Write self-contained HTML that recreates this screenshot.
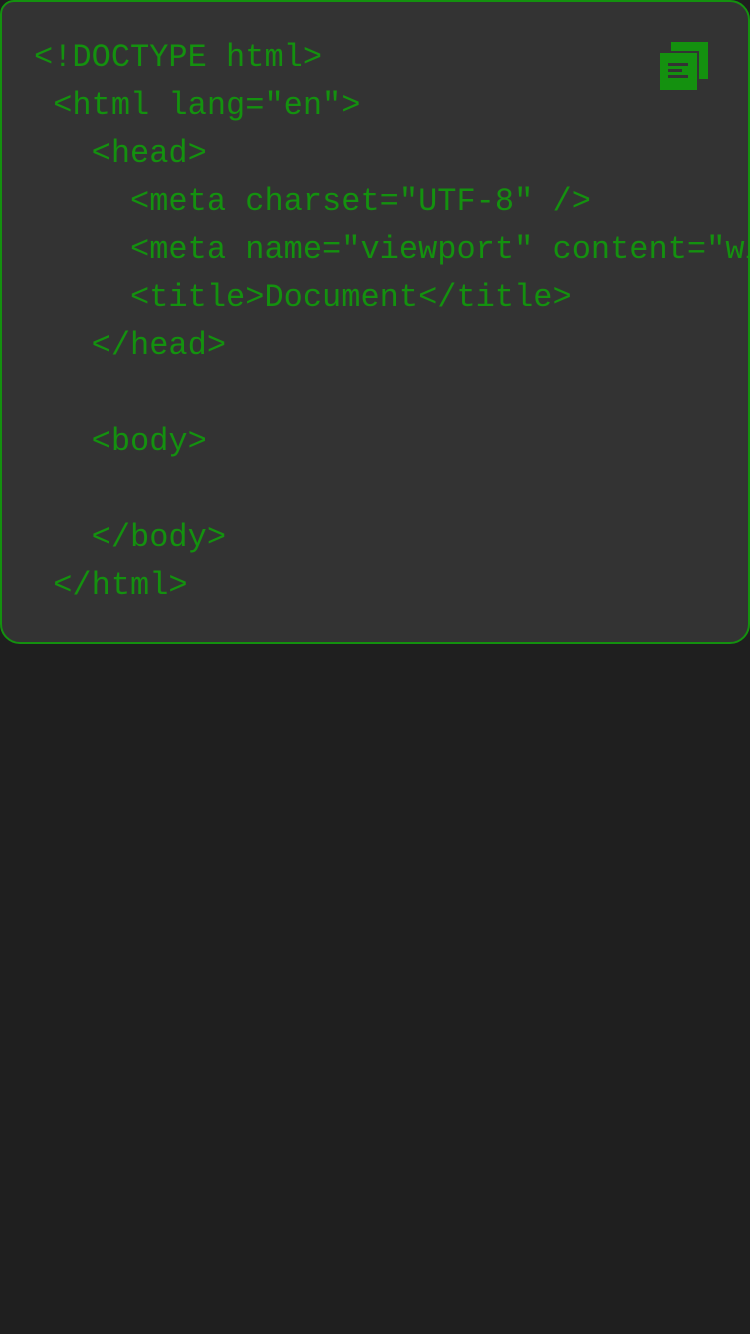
<!DOCTYPE html>
<html><head><meta charset="utf-8"><style>
html,body{margin:0;padding:0;background:#1f1f1f;width:750px;height:1334px;overflow:hidden}
.card{position:absolute;left:0;top:0;width:746px;height:640px;background:#333;border:2px solid #14910f;border-radius:14px 20px 20px 20px;overflow:hidden}
pre{margin:0;position:absolute;left:32px;top:32px;font-family:"Liberation Mono",monospace;font-size:32px;line-height:48px;color:#14910f;white-space:pre}
svg{position:absolute;left:656px;top:38px}
</style></head><body>
<div class="card">
<pre>&lt;!DOCTYPE html&gt;
 &lt;html lang="en"&gt;
   &lt;head&gt;
     &lt;meta charset="UTF-8" /&gt;
     &lt;meta name="viewport" content="width=device-width"&gt;
     &lt;title&gt;Document&lt;/title&gt;
   &lt;/head&gt;

   &lt;body&gt;

   &lt;/body&gt;
 &lt;/html&gt;</pre>
<svg width="52" height="52" viewBox="658 40 52 52">
<rect x="671" y="42" width="37" height="37" fill="#14910f"/>
<rect x="658" y="51" width="41" height="41" fill="#333"/>
<rect x="660" y="53" width="37" height="37" fill="#14910f"/>
<rect x="668" y="63" width="20" height="3" fill="#333"/>
<rect x="668" y="69" width="14" height="3" fill="#333"/>
<rect x="668" y="75" width="20" height="3" fill="#333"/>
</svg>
</div>
</body></html>
